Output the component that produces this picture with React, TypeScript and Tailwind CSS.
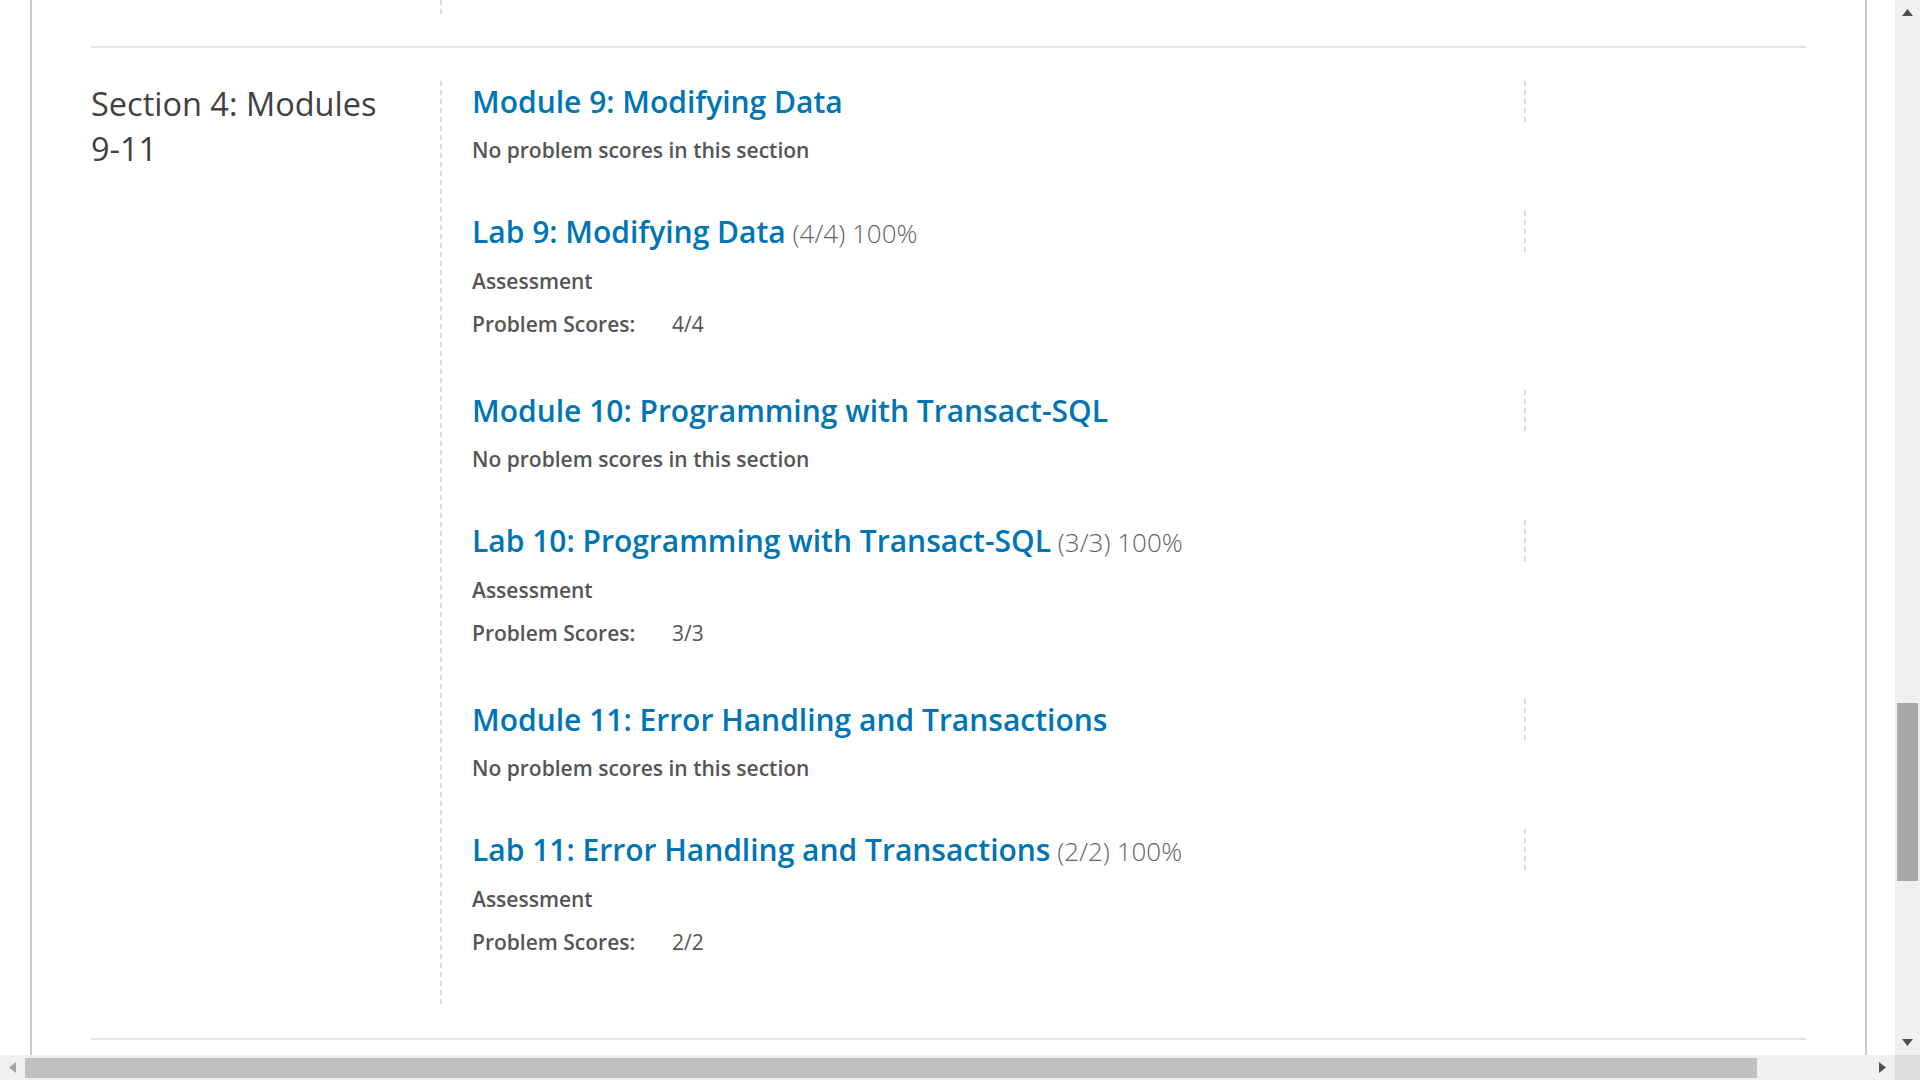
import React from "react";

type Item =
  | { kind: "module"; title: string }
  | { kind: "lab"; title: string; score: string; ps: string };

const items: Item[] = [
  { kind: "module", title: "Module 9: Modifying Data" },
  { kind: "lab", title: "Lab 9: Modifying Data", score: "(4/4) 100%", ps: "4/4" },
  { kind: "module", title: "Module 10: Programming with Transact-SQL" },
  { kind: "lab", title: "Lab 10: Programming with Transact-SQL", score: "(3/3) 100%", ps: "3/3" },
  { kind: "module", title: "Module 11: Error Handling and Transactions" },
  { kind: "lab", title: "Lab 11: Error Handling and Transactions", score: "(2/2) 100%", ps: "2/2" },
];

const DASH =
  "bg-[repeating-linear-gradient(to_bottom,#dcdcdc_0px,#dcdcdc_5px,transparent_5px,transparent_9px)]";

function TitleRow({ title, score }: { title: string; score?: string }) {
  return (
    <div className="flex h-[42px]">
      <h3 className="flex-1 text-[30px] leading-[42px] font-semibold text-[#0075b4] whitespace-nowrap">
        {title}
        {score && (
          <span className="text-[26px] font-light text-[#646464]"> {score}</span>
        )}
      </h3>
      <div className={`w-[2px] h-[42px] ${DASH}`} />
      <div className="w-[280px]" />
    </div>
  );
}

function Block({ item, index }: { item: Item; index: number }) {
  const mt = index === 0 ? "" : item.kind === "lab" ? "mt-[46px]" : "mt-[51px]";
  if (item.kind === "module") {
    return (
      <section className={mt}>
        <TitleRow title={item.title} />
        <p className="mt-[12px] text-[21px] leading-[30px] font-semibold text-[#555555]">
          No problem scores in this section
        </p>
      </section>
    );
  }
  return (
    <section className={mt}>
      <TitleRow title={item.title} score={item.score} />
      <p className="mt-[13px] text-[21px] leading-[30px] font-semibold text-[#555555]">
        Assessment
      </p>
      <dl className="mt-[13px] flex text-[21px] leading-[30px] text-[#555555]">
        <dt className="w-[200px] font-semibold">Problem Scores:</dt>
        <dd className="font-normal">{item.ps}</dd>
      </dl>
    </section>
  );
}

function Tri({ dir, color }: { dir: "up" | "down" | "left" | "right"; color: string }) {
  const pts =
    dir === "up"
      ? "0,7 11,7 5.5,0"
      : dir === "down"
      ? "0,0 11,0 5.5,7"
      : dir === "left"
      ? "7,0 7,11 0,5.5"
      : "0,0 0,11 7,5.5";
  const w = dir === "up" || dir === "down" ? 11 : 7;
  const h = dir === "up" || dir === "down" ? 7 : 11;
  return (
    <svg width={w} height={h} viewBox={`0 0 ${w} ${h}`} className="block">
      <polygon points={pts} fill={color} />
    </svg>
  );
}

export default function App() {
  return (
    <div className="w-[1920px] h-[1080px] overflow-hidden bg-white flex flex-col font-['Open_Sans',sans-serif]">
      <div className="flex h-[1055px]">
        {/* page */}
        <div className="w-[1895px] h-[1055px] pl-[30px] overflow-hidden">
          <div className="w-[1837px] h-full border-x-2 border-[#c8c8c8] px-[59px]">
            {/* tail of previous section */}
            <div className="flex h-[14px]">
              <div className="w-[349px]" />
              <div className={`w-[2px] h-[14px] ${DASH}`} />
            </div>
            <div className="mt-[32px] h-[2px] bg-[#e3e3e3]" />
            <div className="mt-[33px] flex">
              <div className="w-[349px] shrink-0">
                <h2 className="w-[330px] text-[32.5px] leading-[45px] font-normal text-[#414141]">
                  Section 4: Modules <span className="whitespace-nowrap">9-11</span>
                </h2>
              </div>
              <div className={`w-[2px] shrink-0 ${DASH}`} />
              <div className="flex-1 pl-[30px] pb-[49px]">
                {items.map((it, i) => (
                  <Block key={i} item={it} index={i} />
                ))}
              </div>
            </div>
            <div className="mt-[32px] h-[2px] bg-[#e3e3e3]" />
          </div>
        </div>
        {/* vertical scrollbar */}
        <div className="w-[25px] h-[1055px] bg-[#f0f0f0] flex flex-col items-center">
          <div className="h-[25px] pt-[9px]">
            <Tri dir="up" color="#505050" />
          </div>
          <div className="mt-[678px] w-[21px] h-[178px] bg-[#a8a8a8]" />
          <div className="flex-1" />
          <div className="h-[25px] pt-[9px]">
            <Tri dir="down" color="#505050" />
          </div>
        </div>
      </div>
      {/* horizontal scrollbar */}
      <div className="flex h-[25px]">
        <div className="w-[1895px] h-[25px] bg-[#f0f0f0] flex items-center">
          <div className="w-[25px] h-[25px] flex items-center justify-center">
            <Tri dir="left" color="#a3a3a3" />
          </div>
          <div className="w-[1732px] h-[20px] bg-[#c1c1c1]" />
          <div className="flex-1" />
          <div className="w-[25px] h-[25px] flex items-center justify-center">
            <Tri dir="right" color="#505050" />
          </div>
        </div>
        <div className="w-[25px] h-[25px] bg-[#dcdcdc]" />
      </div>
    </div>
  );
}
